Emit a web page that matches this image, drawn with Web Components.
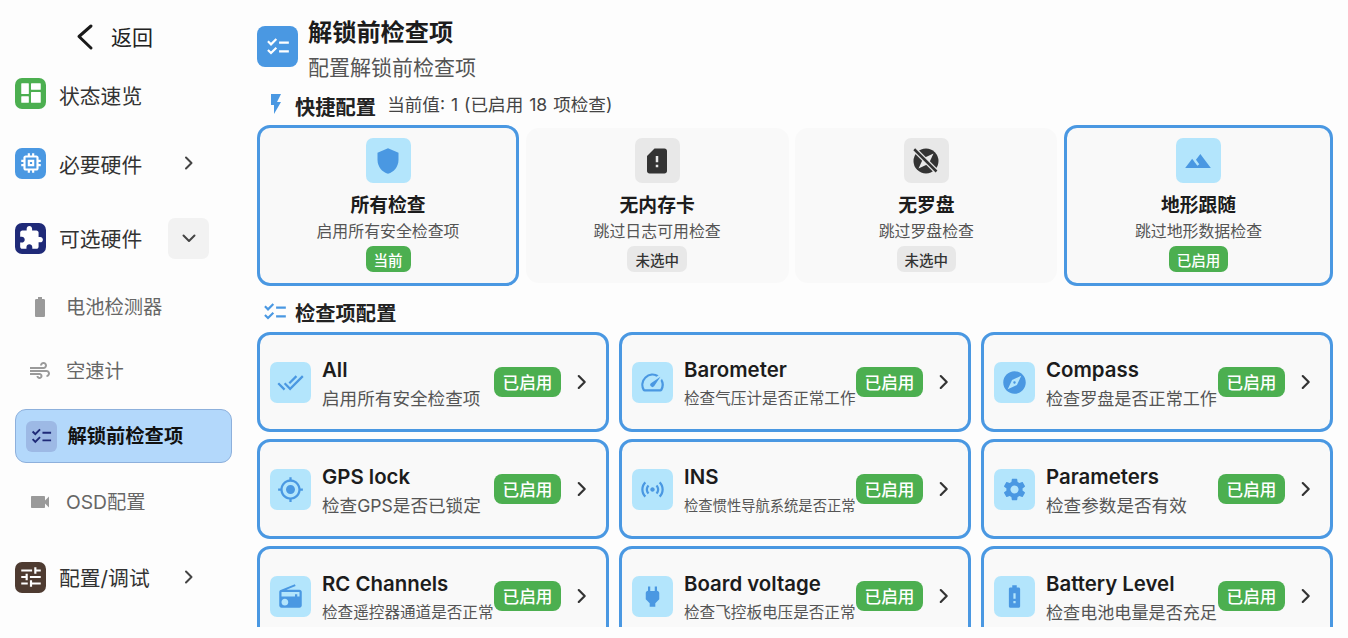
<!DOCTYPE html>
<html lang="zh">
<head>
<meta charset="utf-8">
<title>解锁前检查项</title>
<style>
  html, body {
    margin: 0;
    height: 638px;
    overflow: hidden;
    background: #fdfdfd;
    font-family: "Inter", "Noto Sans CJK SC", sans-serif;
  }
</style>
</head>
<body>
<app-shell>
  <side-bar slot="side">
    <back-row>返回</back-row>
    <nav-item icon="dashboard" tile="#4caf50" style="margin-top:0;--nudge:3px">状态速览</nav-item>
    <nav-item icon="memory" tile="#4a98e2" trailing="right" style="margin-top:8px;--nudge:1px">必要硬件</nav-item>
    <nav-item icon="extension" tile="#1f2a78" trailing="expand" style="margin-top:13px;--nudge:-1px">可选硬件</nav-item>
    <sub-item icon="battery" style="margin-top:6px">电池检测器</sub-item>
    <sub-item icon="air">空速计</sub-item>
    <sub-item icon="checklist" active style="margin-top:6px">解锁前检查项</sub-item>
    <sub-item icon="videocam" style="margin-top:7px">OSD配置</sub-item>
    <nav-item icon="tune" tile="#4e3b31" trailing="right" style="margin-top:12px">配置/调试</nav-item>
  </side-bar>

  <page-header title="解锁前检查项" sub="配置解锁前检查项"></page-header>

  <section-title icon="bolt" note="当前值: 1 (已启用 18 项检查)" style="height:35px">快捷配置</section-title>
  <quick-grid>
    <quick-card icon="shield" on label="当前" title="所有检查" sub="启用所有安全检查项"></quick-card>
    <quick-card icon="sd_alert" label="未选中" title="无内存卡" sub="跳过日志可用检查"></quick-card>
    <quick-card icon="explore_off" label="未选中" title="无罗盘" sub="跳过罗盘检查"></quick-card>
    <quick-card icon="terrain" on label="已启用" title="地形跟随" sub="跳过地形数据检查"></quick-card>
  </quick-grid>

  <section-title icon="checklist" small style="height:46px">检查项配置</section-title>
  <check-grid>
    <check-card icon="done_all" title="All" sub="启用所有安全检查项" fit="17.6"></check-card>
    <check-card icon="speed" title="Barometer" sub="检查气压计是否正常工作" fit="15.6"></check-card>
    <check-card icon="explore" title="Compass" sub="检查罗盘是否正常工作" fit="17.1"></check-card>
    <check-card icon="gps" title="GPS lock" sub="检查GPS是否已锁定" fit="17.6"></check-card>
    <check-card icon="sensors" title="INS" sub="检查惯性导航系统是否正常" fit="14.3"></check-card>
    <check-card icon="settings" title="Parameters" sub="检查参数是否有效" fit="17.6"></check-card>
    <check-card icon="radio" title="RC Channels" sub="检查遥控器通道是否正常" fit="15.6"></check-card>
    <check-card icon="power" title="Board voltage" sub="检查飞控板电压是否正常" fit="15.6"></check-card>
    <check-card icon="battery_alert" title="Battery Level" sub="检查电池电量是否充足" fit="17.1"></check-card>
  </check-grid>
</app-shell>

<script>
const ICONS = {
  dashboard: '<path d="M3.5 3h6c.3 0 .5.2.5.5v9c0 .3-.2.5-.5.5h-6c-.3 0-.5-.2-.5-.5v-9c0-.3.2-.5.5-.5zm0 12h6c.3 0 .5.2.5.5v5c0 .3-.2.5-.5.5h-6c-.3 0-.5-.2-.5-.5v-5c0-.3.2-.5.5-.5zm9-12h8c.3 0 .5.2.5.5v5c0 .3-.2.5-.5.5h-8c-.3 0-.5-.2-.5-.5v-5c0-.3.2-.5.5-.5zm0 8h8c.3 0 .5.2.5.5v9c0 .3-.2.5-.5.5h-8c-.3 0-.5-.2-.5-.5v-9c0-.3.2-.5.5-.5z"/>',
  memory: '<path d="M15 9H9v6h6V9zm-2 4h-2v-2h2v2zm8-2V9h-2V7c0-1.1-.9-2-2-2h-2V3h-2v2h-2V3H9v2H7c-1.1 0-2 .9-2 2v2H3v2h2v2H3v2h2v2c0 1.1.9 2 2 2h2v2h2v-2h2v2h2v-2h2c1.1 0 2-.9 2-2v-2h2v-2h-2v-2h2zm-4 6H7V7h10v10z"/>',
  extension: '<path d="M20.5 11H19V7c0-1.1-.9-2-2-2h-4V3.5C13 2.12 11.88 1 10.5 1S8 2.12 8 3.5V5H4c-1.1 0-1.99.9-1.99 2v3.8H3.5c1.49 0 2.7 1.21 2.7 2.7s-1.21 2.7-2.7 2.7H2V20c0 1.1.9 2 2 2h3.8v-1.5c0-1.49 1.21-2.7 2.7-2.7 1.49 0 2.7 1.21 2.7 2.7V22H17c1.1 0 2-.9 2-2v-4h1.5c1.38 0 2.5-1.12 2.5-2.5S21.88 11 20.5 11z"/>',
  battery: '<path d="M15.67 4H14V2h-4v2H8.33C7.6 4 7 4.6 7 5.33v15.33C7 21.4 7.6 22 8.33 22h7.33c.74 0 1.34-.6 1.34-1.33V5.33C17 4.6 16.4 4 15.67 4z"/>',
  air: '<path d="M14.5 17c0 1.65-1.35 3-3 3s-3-1.35-3-3h2c0 .55.45 1 1 1s1-.45 1-1-.45-1-1-1H2v-2h9.5c1.65 0 3 1.35 3 3zM19 6.5C19 4.57 17.43 3 15.5 3S12 4.57 12 6.5h2c0-.83.67-1.5 1.5-1.5s1.5.67 1.5 1.5S16.33 8 15.5 8H2v2h13.5c1.93 0 3.5-1.57 3.5-3.5zm-.5 4.5H2v2h16.5c.83 0 1.5.67 1.5 1.5s-.67 1.5-1.5 1.5v2c1.93 0 3.5-1.57 3.5-3.5S20.43 11 18.5 11z"/>',
  checklist: '<path d="M22 7h-9v2h9V7zm0 8h-9v2h9v-2zM5.54 11 2 7.46l1.41-1.41 2.12 2.12 4.24-4.24 1.41 1.41L5.54 11zm0 8L2 15.46l1.41-1.41 2.12 2.12 4.24-4.24 1.41 1.41L5.54 19z"/>',
  videocam: '<path d="M17 10.5V7c0-.55-.45-1-1-1H4c-.55 0-1 .45-1 1v10c0 .55.45 1 1 1h12c.55 0 1-.45 1-1v-3.5l4 4v-11l-4 4z"/>',
  tune: '<path d="M3 17v2h6v-2H3zM3 5v2h10V5H3zm10 16v-2h8v-2h-8v-2h-2v6h2zM7 9v2H3v2h4v2h2V9H7zm14 4v-2H11v2h10zm-6-4h2V7h4V5h-4V3h-2v6z"/>',
  bolt: '<path d="M7 2v11h3v9l7-12h-4l4-8z"/>',
  shield: '<path d="M12 1 3 5v6c0 5.55 3.84 10.74 9 12 5.16-1.26 9-6.45 9-12V5l-9-4z"/>',
  sd_alert: '<path d="M18 2h-8L4.02 8 4 20c0 1.1.9 2 2 2h12c1.1 0 2-.9 2-2V4c0-1.1-.9-2-2-2zm-5 15h-2v-2h2v2zm0-4h-2V8h2v5z"/>',
  explore_off: '<circle cx="12" cy="12" r="10"/><path fill="#e8e8e8" d="M18 6l-3.81 8.19L6 18l3.81-8.19z"/><path d="M2.6 2.6 21.4 21.4" stroke="#e8e8e8" stroke-width="4.2"/><path d="M2.6 2.6 20.4 20.4" stroke="#333" stroke-width="2"/>',
  terrain: '<path d="M14 6l-3.75 5 2.85 3.8-1.6 1.2C9.81 13.75 7 10 7 10l-6 8h22L14 6z"/>',
  done_all: '<path d="M18 7l-1.41-1.41-6.34 6.34 1.41 1.41L18 7zm4.24-1.41L11.66 16.17 7.48 12l-1.41 1.41L11.66 19l12-12-1.42-1.41zM.41 13.41 6 19l1.41-1.41L1.83 12 .41 13.41z"/>',
  speed: '<path d="M20.38 8.57l-1.23 1.85a8 8 0 0 1-.22 7.58H5.07A8 8 0 0 1 15.58 6.85l1.85-1.23A10 10 0 0 0 3.35 19a2 2 0 0 0 1.72 1h13.85a2 2 0 0 0 1.74-1 10 10 0 0 0-.27-10.44zm-9.79 6.84a2 2 0 0 0 2.83 0l5.66-8.49-8.49 5.66a2 2 0 0 0 0 2.83z"/>',
  explore: '<path d="M12 10.9c-.61 0-1.1.49-1.1 1.1s.49 1.1 1.1 1.1c.61 0 1.1-.49 1.1-1.1s-.49-1.1-1.1-1.1zM12 2C6.48 2 2 6.48 2 12s4.48 10 10 10 10-4.48 10-10S17.52 2 12 2zm2.19 12.19L6 18l3.81-8.19L18 6l-3.81 8.19z"/>',
  gps: '<path d="M12 8c-2.21 0-4 1.79-4 4s1.79 4 4 4 4-1.79 4-4-1.79-4-4-4zm8.94 3c-.46-4.17-3.77-7.48-7.94-7.94V1h-2v2.06C6.83 3.52 3.52 6.83 3.06 11H1v2h2.06c.46 4.17 3.77 7.48 7.94 7.94V23h2v-2.06c4.17-.46 7.48-3.77 7.94-7.94H23v-2h-2.06zM12 19c-3.87 0-7-3.13-7-7s3.13-7 7-7 7 3.13 7 7-3.13 7-7 7z"/>',
  sensors: '<path d="M7.76 16.24C6.67 15.16 6 13.66 6 12s.67-3.16 1.76-4.24l1.42 1.42C8.45 9.9 8 10.9 8 12c0 1.1.45 2.1 1.17 2.83l-1.41 1.41zm8.48 0C17.33 15.16 18 13.66 18 12s-.67-3.16-1.76-4.24l-1.42 1.42C15.55 9.9 16 10.9 16 12c0 1.1-.45 2.1-1.17 2.83l1.41 1.41zM12 10c-1.1 0-2 .9-2 2s.9 2 2 2 2-.9 2-2-.9-2-2-2zm8 2c0 2.21-.9 4.21-2.35 5.65l1.42 1.42C20.88 17.26 22 14.76 22 12s-1.12-5.26-2.93-7.07l-1.42 1.42C19.1 7.79 20 9.79 20 12zM6.35 6.35 4.93 4.93C3.12 6.74 2 9.24 2 12s1.12 5.26 2.93 7.07l1.42-1.42C4.9 16.21 4 14.21 4 12s.9-4.21 2.35-5.65z"/>',
  settings: '<path d="M19.14 12.94c.04-.3.06-.61.06-.94 0-.32-.02-.64-.07-.94l2.03-1.58c.18-.14.23-.41.12-.61l-1.92-3.32c-.12-.22-.37-.29-.59-.22l-2.39.96c-.5-.38-1.03-.7-1.62-.94l-.36-2.54c-.04-.24-.24-.41-.48-.41h-3.84c-.24 0-.43.17-.47.41l-.36 2.54c-.59.24-1.13.57-1.62.94l-2.39-.96c-.22-.08-.47 0-.59.22L2.74 8.87c-.12.21-.08.47.12.61l2.03 1.58c-.05.3-.09.63-.09.94s.02.64.07.94l-2.03 1.58c-.18.14-.23.41-.12.61l1.92 3.32c.12.22.37.29.59.22l2.39-.96c.5.38 1.03.7 1.62.94l.36 2.54c.05.24.24.41.48.41h3.84c.24 0 .44-.17.47-.41l.36-2.54c.59-.24 1.13-.56 1.62-.94l2.39.96c.22.08.47 0 .59-.22l1.92-3.32c.12-.22.07-.47-.12-.61l-2.01-1.58zM12 15.6c-1.98 0-3.6-1.62-3.6-3.6s1.62-3.6 3.6-3.6 3.6 1.62 3.6 3.6-1.62 3.6-3.6 3.6z"/>',
  radio: '<path d="M3.24 6.15C2.51 6.43 2 7.17 2 8v12c0 1.1.89 2 2 2h16c1.11 0 2-.9 2-2V8c0-1.11-.89-2-2-2H8.3l8.26-3.34L15.88 1 3.24 6.15zM7 20c-1.66 0-3-1.34-3-3s1.34-3 3-3 3 1.34 3 3-1.34 3-3 3zm13-8h-2v-2h-2v2H4V8h16v4z"/>',
  power: '<path d="M16.01 7L16 3h-2v4h-4V3H8v4h-.01C7 6.99 6 7.99 6 8.99v5.49L9.5 18v3h5v-3l3.5-3.51v-5.5c0-1-1-2-1.99-1.99z"/>',
  battery_alert: '<path d="M15.67 4H14V2h-4v2H8.33C7.6 4 7 4.6 7 5.33v15.33C7 21.4 7.6 22 8.33 22h7.33c.74 0 1.34-.6 1.34-1.33V5.33C17 4.6 16.4 4 15.67 4zM13 18h-2v-2h2v2zm0-4h-2V9h2v5z"/>'
}

// chevrons are stroked, the rest are filled material paths
function chevron(dir, size, color, width) {
  const d = dir === 'down' ? 'M6.5 9.5 12 15l5.5-5.5' : 'M9 6.5 14.5 12 9 17.5'
  return `<svg width="${size}" height="${size}" viewBox="0 0 24 24" fill="none" stroke="${color}" stroke-width="${width}" stroke-linecap="round" stroke-linejoin="round"><path d="${d}"/></svg>`
}

function icon(name, size, color) {
  return `<svg width="${size}" height="${size}" viewBox="0 0 24 24" fill="${color}" stroke="none" style="display:block;flex:none">${ICONS[name]}</svg>`
}

class AppShell extends HTMLElement {
  constructor() {
    super()
    this.attachShadow({ mode: 'open' })
    this.shadowRoot.innerHTML = `
      <style>
        :host { display: flex; width: 1348px; height: 638px; }
        #side { flex: none; width: 250px; }
        #main {
          flex: none;
          width: 1076px;
          margin-left: 7px;
          height: 627px;
          overflow: hidden;
          display: flex;
          flex-direction: column;
        }
      </style>
      <div id="side"><slot name="side"></slot></div>
      <div id="main"><slot></slot></div>
    `
  }
}

class SideBar extends HTMLElement {
  constructor() {
    super()
    this.attachShadow({ mode: 'open' })
    this.shadowRoot.innerHTML = `
      <style>
        :host { display: flex; flex-direction: column; padding-top: 12px; }
      </style>
      <slot></slot>
    `
  }
}

class BackRow extends HTMLElement {
  constructor() {
    super()
    this.attachShadow({ mode: 'open' })
    this.shadowRoot.innerHTML = `
      <style>
        :host {
          display: flex;
          align-items: center;
          height: 50px;
          padding-left: 74px;
          gap: 15px;
          font-size: 21px;
          color: #222;
        }
        svg { display: block; }
        div { margin-top: -2px; }
      </style>
      <svg width="22" height="30" viewBox="0 0 22 30" fill="none" stroke="#1a1a1a" stroke-width="3" stroke-linecap="round" stroke-linejoin="round"><path d="M17 4 5 14.5 17 26"/></svg>
      <div><slot></slot></div>
    `
  }
}

class NavItem extends HTMLElement {
  constructor() {
    super()
    this.attachShadow({ mode: 'open' })
  }

  connectedCallback() {
    const trailing = this.getAttribute('trailing')
    let end = ''
    if (trailing === 'right') end = `<div class="end">${chevron('right', 24, '#444', 2)}</div>`
    if (trailing === 'expand') end = `<div class="end box">${chevron('down', 24, '#444', 2)}</div>`
    this.shadowRoot.innerHTML = `
      <style>
        :host {
          display: flex;
          align-items: center;
          height: 62px;
          padding: 0 41px 0 15px;
          font-size: 20.8px;
          color: #333;
        }
        #tile {
          flex: none;
          width: 31px;
          height: 31px;
          border-radius: 7px;
          display: flex;
          align-items: center;
          justify-content: center;
          background: ${this.getAttribute('tile')};
        }
        #text { flex: 1; margin: var(--nudge, 0px) 0 0 13px; white-space: nowrap; }
        .end {
          flex: none;
          width: 41px;
          height: 41px;
          display: flex;
          align-items: center;
          justify-content: center;
          border-radius: 7px;
        }
        .box { background: #f2f2f2; }
      </style>
      <div id="tile">${icon(this.getAttribute('icon'), 26, '#fff')}</div>
      <div id="text"><slot></slot></div>
      ${end}
    `
  }
}

class SubItem extends HTMLElement {
  constructor() {
    super()
    this.attachShadow({ mode: 'open' })
  }

  connectedCallback() {
    const active = this.hasAttribute('active')
    const name = this.getAttribute('icon')
    this.shadowRoot.innerHTML = `
      <style>
        :host {
          display: flex;
          align-items: center;
          box-sizing: border-box;
          height: 64px;
          padding-left: 28px;
          font-size: 19.3px;
          color: #666;
        }
        :host([active]) {
          height: 54px;
          width: 217px;
          margin-left: 15px;
          padding-left: 9.5px;
          background: #b3d8fb;
          border: 1.5px solid #8db0dc;
          border-radius: 11px;
          color: #111;
          font-weight: 700;
        }
        #tile {
          flex: none;
          width: 31px;
          height: 31px;
          border-radius: 6px;
          background: #9db9e5;
          display: flex;
          align-items: center;
          justify-content: center;
        }
        #text { margin: -3px 0 0 ${active ? 11 : 14}px; white-space: nowrap; }
      </style>
      ${active ? `<div id="tile">${icon(name, 23, '#1f2a78')}</div>` : icon(name, 24, '#9a9a9a')}
      <div id="text"><slot></slot></div>
    `
  }
}

class PageHeader extends HTMLElement {
  constructor() {
    super()
    this.attachShadow({ mode: 'open' })
  }

  connectedCallback() {
    this.shadowRoot.innerHTML = `
      <style>
        :host { display: flex; flex: none; padding-top: 15px; height: 75px; }
        #tile {
          flex: none;
          width: 41px;
          height: 41px;
          margin-top: 11px;
          border-radius: 8px;
          background: #4a98e2;
          display: flex;
          align-items: center;
          justify-content: center;
        }
        #col { margin-left: 10px; }
        h1 { margin: 0; font-size: 24.2px; line-height: 36px; font-weight: 700; color: #1c1c1c; }
        p { margin: 2px 0 0; font-size: 21px; line-height: 30px; color: #555; }
      </style>
      <div id="tile">${icon('checklist', 26, '#fff')}</div>
      <div id="col">
        <h1>${this.getAttribute('title')}</h1>
        <p>${this.getAttribute('sub')}</p>
      </div>
    `
  }
}

class SectionTitle extends HTMLElement {
  constructor() {
    super()
    this.attachShadow({ mode: 'open' })
  }

  connectedCallback() {
    const note = this.getAttribute('note')
    const small = this.hasAttribute('small')
    this.shadowRoot.innerHTML = `
      <style>
        :host {
          display: flex;
          align-items: center;
          flex: none;
          box-sizing: border-box;
          padding-left: ${small ? 5 : 7}px;
          padding-top: ${small ? 5 : 0}px;
        }
        svg { margin-top: ${small ? 0 : -7}px; }
        b { margin: ${small ? 0 : -4}px 0 0 7px; font-size: 20.3px; font-weight: 700; color: #222; white-space: nowrap; }
        span { margin: -8px 0 0 11px; font-size: 17.6px; word-spacing: 1px; color: #444; white-space: nowrap; }
      </style>
      ${icon(this.getAttribute('icon'), small ? 26 : 24, '#4a98e2')}
      <b><slot></slot></b>
      ${note ? `<span>${note}</span>` : ''}
    `
  }
}

class QuickGrid extends HTMLElement {
  constructor() {
    super()
    this.attachShadow({ mode: 'open' })
    this.shadowRoot.innerHTML = `
      <style>
        :host {
          display: grid;
          flex: none;
          grid-template-columns: 262fr 263fr 262fr 269fr;
          column-gap: 6.67px;
        }
      </style>
      <slot></slot>
    `
  }
}

class StatusBadge extends HTMLElement {
  constructor() {
    super()
    this.attachShadow({ mode: 'open' })
    this.shadowRoot.innerHTML = `
      <style>
        :host {
          display: inline-flex;
          align-items: center;
          justify-content: center;
          flex: none;
          background: #4caf50;
          color: #fff;
          font-weight: 500;
          white-space: nowrap;
        }
        :host([size=small]) { height: 26px; padding: 0 8px; border-radius: 7px; font-size: 14.5px; }
        :host([size=big]) { width: 67px; height: 30px; border-radius: 8px; font-size: 16.6px; }
        :host([off]) { background: #e8e8e8; color: #333; }
      </style>
      <slot></slot>
    `
  }
}

class QuickCard extends HTMLElement {
  constructor() {
    super()
    this.attachShadow({ mode: 'open' })
  }

  connectedCallback() {
    const on = this.hasAttribute('on')
    this.shadowRoot.innerHTML = `
      <style>
        :host {
          display: flex;
          flex-direction: column;
          align-items: center;
          box-sizing: border-box;
          height: 155px;
          margin: 3px 0;
          padding-top: 10px;
          background: #f9f9f9;
          border-radius: 13px;
        }
        :host([on]) {
          height: 161px;
          margin: 0;
          border: 3px solid #4a98e2;
        }
        #tile {
          flex: none;
          width: 45px;
          height: 45px;
          border-radius: 7px;
          background: ${on ? '#b3e5fc' : '#e8e8e8'};
          display: flex;
          align-items: center;
          justify-content: center;
        }
        h3 { margin: 10px 0 0; font-size: 18.8px; line-height: 26px; font-weight: 700; color: #1c1c1c; }
        p { margin: 2px 0 3px; font-size: 15.9px; line-height: 22px; color: #555; white-space: nowrap; }
      </style>
      <div id="tile">${icon(this.getAttribute('icon'), on ? 28 : 30, on ? '#4a98e2' : '#333')}</div>
      <h3>${this.getAttribute('title')}</h3>
      <p>${this.getAttribute('sub')}</p>
      <status-badge size="small" ${on ? '' : 'off'}>${this.getAttribute('label')}</status-badge>
    `
  }
}

class CheckGrid extends HTMLElement {
  constructor() {
    super()
    this.attachShadow({ mode: 'open' })
    this.shadowRoot.innerHTML = `
      <style>
        :host {
          display: grid;
          flex: none;
          grid-template-columns: repeat(3, 352px);
          column-gap: 10px;
          row-gap: 7px;
        }
      </style>
      <slot></slot>
    `
  }
}

class CheckCard extends HTMLElement {
  constructor() {
    super()
    this.attachShadow({ mode: 'open' })
  }

  connectedCallback() {
    this.shadowRoot.innerHTML = `
      <style>
        :host {
          display: flex;
          align-items: center;
          box-sizing: border-box;
          height: 100px;
          padding-left: 10px;
          background: #f9f9f9;
          border: 3px solid #4a98e2;
          border-radius: 13px;
        }
        #tile {
          flex: none;
          width: 41px;
          height: 41px;
          border-radius: 7px;
          background: #b3e5fc;
          display: flex;
          align-items: center;
          justify-content: center;
        }
        #col { flex: none; width: 172px; margin-left: 11px; padding-top: 4px; }
        h3 { margin: 0; font-size: 20.4px; line-height: 26px; font-weight: 600; color: #1c1c1c; white-space: nowrap; }
        p { margin: 4px 0 0; font-size: ${this.getAttribute('fit')}px; line-height: 24px; color: #555; white-space: nowrap; }
        #arrow { flex: none; margin-left: 8px; display: flex; }
      </style>
      <div id="tile">${icon(this.getAttribute('icon'), 27, '#4a98e2')}</div>
      <div id="col">
        <h3>${this.getAttribute('title')}</h3>
        <p>${this.getAttribute('sub')}</p>
      </div>
      <status-badge size="big">已启用</status-badge>
      <div id="arrow">${chevron('right', 26, '#333', 2)}</div>
    `
  }
}

customElements.define('status-badge', StatusBadge)
customElements.define('app-shell', AppShell)
customElements.define('side-bar', SideBar)
customElements.define('back-row', BackRow)
customElements.define('nav-item', NavItem)
customElements.define('sub-item', SubItem)
customElements.define('page-header', PageHeader)
customElements.define('section-title', SectionTitle)
customElements.define('quick-grid', QuickGrid)
customElements.define('quick-card', QuickCard)
customElements.define('check-grid', CheckGrid)
customElements.define('check-card', CheckCard)
</script>
</body>
</html>
